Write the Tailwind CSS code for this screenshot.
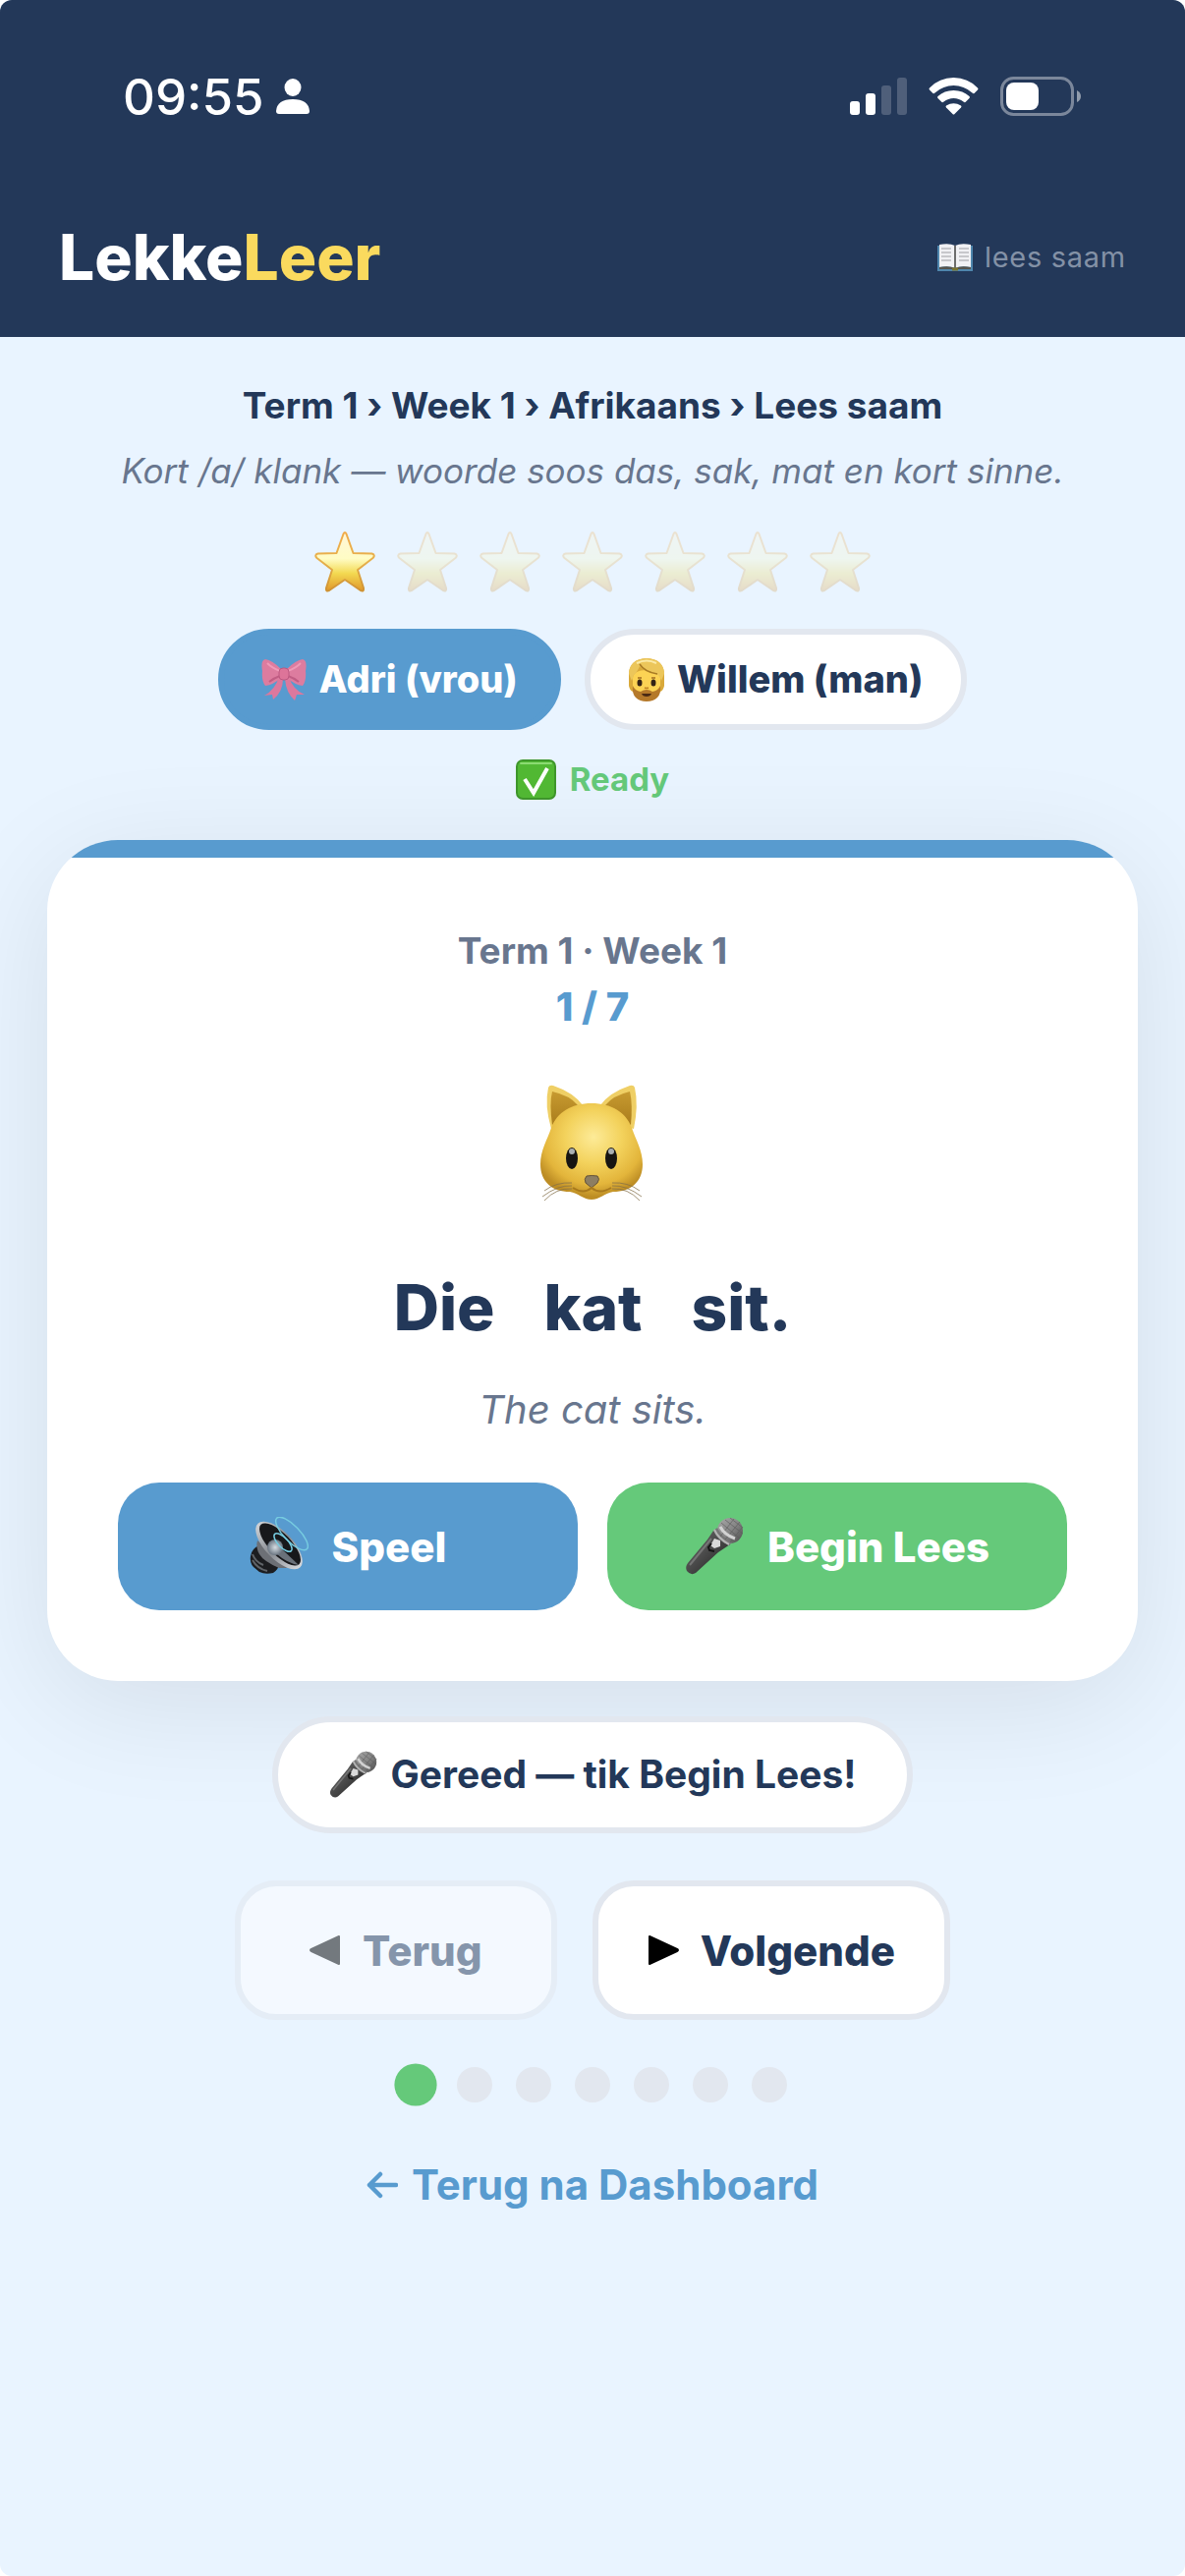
<!DOCTYPE html>
<html lang="af">
  <head>
    <meta charset="UTF-8" />
    <meta name="viewport" content="width=device-width, initial-scale=1.0" />
    <script src="https://cdn.jsdelivr.net/npm/@tailwindcss/browser@4"></script>
    <title>LekkeLeer</title>
  </head>
  <body class="bg-white font-['Inter','Liberation_Sans',sans-serif] text-[#233859]">
    <!-- shared drawings -->
    <svg class="absolute h-0 w-0" aria-hidden="true">
      <defs>
        <linearGradient id="starFill" x1="0" y1="0" x2="0" y2="1">
          <stop offset="0" stop-color="#fff6d8" />
          <stop offset=".45" stop-color="#fffcc4" />
          <stop offset=".7" stop-color="#f3d951" />
          <stop offset="1" stop-color="#e0962a" />
        </linearGradient>
        <linearGradient id="starEdge" x1="0" y1="0" x2="0" y2="1">
          <stop offset="0" stop-color="#f0ac4a" />
          <stop offset=".5" stop-color="#e6b04c" />
          <stop offset="1" stop-color="#cf9233" />
        </linearGradient>
        <linearGradient id="micBody" x1="0" y1="0" x2="1" y2="1">
          <stop offset="0" stop-color="#6f6f6f" />
          <stop offset=".45" stop-color="#4c4c4c" />
          <stop offset="1" stop-color="#1c1c1c" />
        </linearGradient>
        <linearGradient id="micHead" x1="0" y1="0" x2="1" y2="1">
          <stop offset="0" stop-color="#a9a9a9" />
          <stop offset=".5" stop-color="#868686" />
          <stop offset="1" stop-color="#4a4a4a" />
        </linearGradient>
        <symbol id="star" viewBox="0 0 66 66">
          <path
            d="M31.500 4.500Q33 1.500 34.500 4.500L41.500 24 60.500 24.500Q64.500 26 61.500 29L46 41 52 59.500Q52.500 63.500 49 62L33 51 17 62Q13.500 63.500 14 59.500L20 41 4.500 29Q1.500 26 5.500 24.500L24.500 24Z"
            fill="url(#starFill)"
            stroke="url(#starEdge)"
            stroke-width="2"
            stroke-linejoin="round"
          />
        </symbol>
        <symbol id="mic" viewBox="0 0 60 60">
          <path d="M29 14 46 28Q40 32 34 36L11 57Q6 60 2 55 0 51 3 47L23 23Z" fill="url(#micBody)" />
          <path d="M27 22 5 49" fill="none" stroke="#858585" stroke-width="2" opacity=".7" />
          <circle cx="46" cy="14" r="13" fill="url(#micHead)" />
          <path d="M33 11Q37 20 48 26L45 29Q33 24 29 14Z" fill="#777" />
          <path d="M37 6 56 22M41 3 59 17M46 1 59 11M36 20 50 2M41 23 56 5M46 26 59 10" stroke="#5a5a5a" stroke-width="1" opacity=".6" />
          <path d="M36 10Q40 18 51 22" fill="none" stroke="#d2d2d2" stroke-width="3" />
          <path d="M30 13Q34 22 45 28" fill="none" stroke="#b5b5b5" stroke-width="2" />
          <path d="M30 22 36 24 36 30 30 32 26 29Z" fill="#d9d9d9" />
          <path d="M27 27 24 31 25 34 30 35" fill="none" stroke="#141414" stroke-width="2" />
        </symbol>
      </defs>
    </svg>

    <div class="min-h-screen overflow-hidden rounded-xl bg-[#e9f4ff]">
      <header class="bg-[#233859] text-white">
        <!-- status bar -->
        <div class="flex h-48 items-center justify-between pt-1 pr-[104px] pl-[125px]">
          <div class="flex items-center gap-3">
            <span class="text-[51px] leading-none font-medium">09:55</span>
            <svg class="h-9 w-[34px]" viewBox="0 0 34 36" fill="white">
              <ellipse cx="17" cy="9" rx="8.500" ry="9" />
              <path d="M3 36Q0 36 0 33 1 21 17 21T34 33Q34 36 31 36Z" />
            </svg>
          </div>
          <div class="flex items-center gap-[22px]">
            <svg class="h-[38px] w-[58px]" viewBox="0 0 58 38" fill="white">
              <rect y="24" width="10" height="14" rx="3" />
              <rect x="16" y="16" width="10" height="22" rx="3" />
              <rect x="32" y="8" width="10" height="30" rx="3" opacity=".2" />
              <rect x="48" width="10" height="38" rx="3" opacity=".2" />
            </svg>
            <svg class="h-[38px] w-[51px]" viewBox="0 0 51 38" fill="white">
              <path d="M1 10.500Q11 0 25.500 0T50 10.500Q51 11.500 50 12.500L46.500 16Q45.500 16.500 44.500 15.500 36 8 25.500 8T6.500 15.500Q5.500 16.500 4.500 16L1 12.500Q0 11.500 1 10.500Z" />
              <path d="M9.500 19Q16 13 25.500 13T41.500 19Q42.500 20 41.500 21L37.500 25Q36.500 25.500 35.500 24.500 31 21 25.500 21T15.500 24.500Q14.500 25.500 13.500 25L9.500 21Q8.500 20 9.500 19Z" />
              <path d="M18 28.500Q25.500 24 33 28.500 34 29.500 33 30.500L26.500 37Q25.500 38 24.500 37L18 30.500Q17 29.500 18 28.500Z" />
            </svg>
            <svg class="h-10 w-[84px]" viewBox="0 0 84 40" fill="white">
              <rect x="1.500" y="1.500" width="72" height="37" rx="12" fill="none" stroke="white" stroke-width="3" opacity=".4" />
              <rect x="6" y="6" width="33" height="28" rx="8" />
              <path d="M78 14Q82 16 82 20T78 26Z" opacity=".5" />
            </svg>
          </div>
        </div>
        <!-- brand -->
        <div class="flex items-start justify-between px-[60px] pt-[30px] pb-[42px]">
          <a href="#" class="text-[64px] leading-[79px] font-extrabold">Lekke<span class="text-[#fada5e]">Leer</span></a>
          <span class="flex items-center gap-3 pt-4 text-[29px] leading-[48px] tracking-wide text-[#8391a6]">
            <svg class="h-7 w-9" viewBox="0 0 36 28">
              <path d="M0 2H36V28H0Z" fill="#4f86ad" />
              <path d="M2 1Q12-1 18 2 24-1 34 1V24Q24 22 18 25 12 22 2 24Z" fill="#f1f1f4" />
              <path d="M2 24Q12 22 18 25 24 22 34 24V26H2Z" fill="#56544e" />
              <path d="M18 2V25" stroke="#6d6d6d" stroke-width="2" />
              <path d="M4 5H14M4 9H14M4 13H14M4 17H14M22 5H32M22 9H32M22 13H32M22 17H32" stroke="#b9b9bd" stroke-width="1.500" />
              <path d="M15 26H21" stroke="#7a7430" stroke-width="3" />
            </svg>
            lees saam
          </span>
        </div>
      </header>

      <main class="flex flex-col items-center px-12 pt-11">
        <p class="text-[37px] leading-[52px] font-bold">Term 1 › Week 1 › Afrikaans › Lees saam</p>
        <p class="mt-3 text-[35px] leading-[56px] text-[#68768e] italic">Kort /a/ klank — woorde soos das, sak, mat en kort sinne.</p>

        <div class="mt-8 flex gap-[18px]" role="img" aria-label="1 van 7 sterre">
          <svg class="size-[66px]"><use href="#star" /></svg>
          <svg class="size-[66px] opacity-25"><use href="#star" /></svg>
          <svg class="size-[66px] opacity-25"><use href="#star" /></svg>
          <svg class="size-[66px] opacity-25"><use href="#star" /></svg>
          <svg class="size-[66px] opacity-25"><use href="#star" /></svg>
          <svg class="size-[66px] opacity-25"><use href="#star" /></svg>
          <svg class="size-[66px] opacity-25"><use href="#star" /></svg>
        </div>

        <!-- voice choice -->
        <div class="mt-[35px] flex gap-6">
          <button type="button" class="flex h-[103px] items-center gap-3 rounded-full border-6 border-[#589bcf] bg-[#589bcf] px-[38px] text-[38px] font-extrabold text-white">
            <svg class="h-[42px] w-[46px]" viewBox="0 0 46 42">
              <path d="M18 18Q14 31 3 37L11 36 12 41Q22 33 22 20ZM28 18Q32 31 44 36L36 36 34 42Q25 34 24 20Z" fill="#dc789d" />
              <path d="M20 10Q11 1 4 0-1 1 1 12 0 22 4 27 12 26 20 19ZM26 10Q35 1 42 0 47 1 45 12 46 22 42 27 34 26 26 19Z" fill="#dd7c9f" />
              <path d="M19 12Q11 9 6 4M27 12Q35 9 40 4" fill="none" stroke="#ef9ab8" stroke-width="2" />
              <path d="M19 17Q13 19 8 23M27 17Q33 19 38 23" fill="none" stroke="#c15d84" stroke-width="2" />
              <rect x="18" y="9" width="10" height="12" rx="4" fill="#dd7499" stroke="#bc5880" />
            </svg>
            Adri (vrou)
          </button>
          <button type="button" class="flex h-[103px] items-center gap-3 rounded-full border-6 border-[#e2e7ef] bg-white px-[38px] text-[38px] font-extrabold">
            <svg class="h-[44px] w-[38px]" viewBox="0 0 38 44">
              <path d="M19 0Q37 1 37 17V28Q36 33 33 34H5Q2 33 1 28V17Q1 1 19 0Z" fill="#d9a93a" />
              <path d="M5 20Q6 12 19 12T33 20V31Q32 40 19 40T5 31Z" fill="#fcd354" />
              <path d="M5 28Q7 33 13 34 19 30 25 34 31 33 33 28 34 36 30 40 26 44 19 44T8 40Q4 36 5 28Z" fill="#b5792a" />
              <path d="M4 23Q1 16 1 15 2 1 19 0 36 1 37 15 37 16 34 23 33 18 29 16 17 14 12 8 9 15 6 17Z" fill="#ecc65a" />
              <path d="M12 6Q17 14 30 16" fill="none" stroke="#a97b24" stroke-width="1.500" />
              <path d="M9 5Q19 0 29 5" fill="none" stroke="#fbeaa6" stroke-width="2" />
              <ellipse cx="12" cy="25" rx="2.500" ry="3.500" fill="#352315" />
              <ellipse cx="26" cy="25" rx="2.500" ry="3.500" fill="#352315" />
              <path d="M10 20H14M24 20H28" stroke="#a06d22" stroke-width="1.500" />
              <path d="M17 30Q19 31 21 30" fill="none" stroke="#c08425" stroke-width="1.500" />
              <path d="M14 36H24Q23 39 19 39T14 36Z" fill="#4b2a13" />
            </svg>
            Willem (man)
          </button>
        </div>

        <p class="mt-6 flex items-center gap-[14px] text-[33px] leading-[52px] font-bold text-[#65c97a]">
          <svg class="size-[41px]" viewBox="0 0 41 41">
            <rect x="1" y="1" width="39" height="39" rx="6" fill="#52b934" stroke="#3f972c" stroke-width="2" />
            <path d="M5 4H36" stroke="#8bdb72" stroke-width="2" stroke-linecap="round" />
            <path d="M9 20 18 34 32 9" fill="none" stroke="white" stroke-width="4" />
          </svg>
          Ready
        </p>

        <!-- reading card -->
        <section class="mt-9 w-full overflow-hidden rounded-[72px] bg-white shadow-[0_24px_120px_rgba(0,0,0,0.09)]">
          <div class="h-[18px] bg-[#589bcf]"></div>
          <div class="flex flex-col items-center px-[72px] pt-[68px] pb-[72px]">
            <p class="text-[37px] leading-[54px] font-bold text-[#68768e]">Term 1 · Week 1</p>
            <p class="text-[40px] leading-[60px] font-extrabold text-[#589bcf]">1 / 7</p>
            <svg class="mt-12 h-[120px] w-[106px]" viewBox="0 0 106 120">
              <defs>
                <radialGradient id="catFace" cx=".52" cy=".35" r=".62">
                  <stop offset="0" stop-color="#fdeb98" />
                  <stop offset=".45" stop-color="#f3d25c" />
                  <stop offset=".8" stop-color="#e3b53b" />
                  <stop offset="1" stop-color="#bd8d24" />
                </radialGradient>
                <linearGradient id="catEar" x1="0" y1="0" x2="0" y2="1">
                  <stop offset="0" stop-color="#c79a30" />
                  <stop offset="1" stop-color="#aa7d1c" />
                </linearGradient>
              </defs>
              <path d="M11 46Q4 22 8 4 9 1 13 2 34 9 44 23L24 42Z" fill="#efcf65" />
              <path d="M12 42Q9 20 12 8 30 12 38 22L24 36Z" fill="url(#catEar)" />
              <path d="M95 46Q100 22 96 4 95 1 91 2 70 9 60 23L80 42Z" fill="#efcf65" />
              <path d="M92 42Q94 20 91 8 74 12 66 22L80 36Z" fill="url(#catEar)" />
              <path d="M52 20C72 20 87 29 93 45 97 57 104 68 104 82 104 100 92 110 74 110 66 111 60 118 52 118 44 118 38 111 30 110 12 110 0 100 0 82 0 68 7 57 11 45 17 29 32 20 52 20Z" fill="url(#catFace)" />
              <ellipse cx="32" cy="76" rx="6" ry="11" fill="#171512" />
              <ellipse cx="72" cy="76" rx="6" ry="11" fill="#171512" />
              <ellipse cx="32" cy="69" rx="3" ry="3" fill="#aab0b2" />
              <ellipse cx="72" cy="69" rx="3" ry="3" fill="#aab0b2" />
              <path d="M47 94Q52 93 58 94 61 97 58 101L52 106 46 101Q44 97 47 94Z" fill="#8d7e62" stroke="#655337" />
              <path d="M33 106Q44 113 52 106 60 113 72 106" fill="none" stroke="#a8791d" stroke-width="2" />
              <g fill="none" stroke="#84704a" stroke-width="1" opacity=".75">
                <path d="M32 101Q16 100 4 109M32 104Q18 103 2 115M32 107Q16 106 4 119" />
                <path d="M73 101Q89 100 101 109M73 104Q87 103 103 115M73 107Q89 106 101 119" />
              </g>
            </svg>
            <h1 class="mt-[62px] flex gap-[50px] text-[64px] leading-[92px] font-extrabold">
              <span>Die</span>
              <span>kat</span>
              <span>sit.</span>
            </h1>
            <p class="mt-7 text-[40px] leading-[60px] text-[#68768e] italic">The cat sits.</p>

            <div class="mt-11 grid w-full grid-cols-2 gap-[30px]">
              <button type="button" class="flex h-[130px] items-center justify-center gap-6 rounded-[42px] bg-[#589bcf] text-[42px] font-extrabold text-white">
                <svg class="size-[60px]" viewBox="0 0 60 60">
                  <defs>
                    <linearGradient id="coneRim" x1="0" y1="0" x2="1" y2="0">
                      <stop offset="0" stop-color="#cfd2d6" />
                      <stop offset=".5" stop-color="#85898f" />
                      <stop offset="1" stop-color="#d5d8dd" />
                    </linearGradient>
                    <radialGradient id="coneDome">
                      <stop offset="0" stop-color="#d6dde3" />
                      <stop offset="1" stop-color="#6b7682" />
                    </radialGradient>
                  </defs>
                  <path d="M10 29Q2 32 1 40 0 47 4 51L10 56Q16 59 24 57 30 53 30 47Z" fill="#1c1d20" />
                  <path d="M3 38Q6 46 14 49M3 44Q8 53 18 55" fill="none" stroke="#5f6368" stroke-width="2" />
                  <path d="M8 24Q6 31 10 38T30 52L42 52Z" fill="#6d7076" />
                  <ellipse cx="30" cy="29" rx="31" ry="14" transform="rotate(46 30 29)" fill="url(#coneRim)" />
                  <ellipse cx="31" cy="28" rx="28" ry="11" transform="rotate(46 31 28)" fill="#17181b" />
                  <path d="M30 30 50 49Q38 47 28 38Z" fill="#6a717a" />
                  <circle cx="26" cy="31" r="8" fill="url(#coneDome)" />
                  <g fill="none" stroke="#76cbe0" stroke-width="1.500">
                    <ellipse cx="43" cy="17" rx="22" ry="8" transform="rotate(46 43 17)" />
                    <ellipse cx="34" cy="26" rx="12" ry="5" transform="rotate(46 34 26)" />
                  </g>
                </svg>
                Speel
              </button>
              <button type="button" class="flex h-[130px] items-center justify-center gap-6 rounded-[42px] bg-[#65c97a] text-[42px] font-extrabold text-white">
                <svg class="size-[60px]"><use href="#mic" /></svg>
                Begin Lees
              </button>
            </div>
          </div>
        </section>

        <p class="mt-9 flex h-[119px] items-center gap-[14px] rounded-full border-6 border-[#e2e7ef] bg-white px-[52px] text-[39px] font-bold">
          <svg class="size-[49px]"><use href="#mic" /></svg>
          Gereed — tik Begin Lees!
        </p>

        <nav class="mt-12 flex gap-9">
          <button type="button" disabled class="flex h-[142px] items-center gap-[22px] rounded-[42px] border-6 border-[#e2e7ef] bg-white px-[70px] text-[42px] font-extrabold opacity-50">
            <svg class="h-[32px] w-[32px]" viewBox="0 0 32 32">
              <path d="M30 2V30L2 17Q0 16 2 15Z" fill="black" stroke="black" stroke-width="2" stroke-linejoin="round" />
            </svg>
            Terug
          </button>
          <button type="button" class="flex h-[142px] items-center gap-[22px] rounded-[42px] border-6 border-[#e2e7ef] bg-white px-[50px] text-[42px] font-extrabold">
            <svg class="h-[32px] w-[32px]" viewBox="0 0 32 32">
              <path d="M2 2V30L30 17Q32 16 30 15Z" fill="black" stroke="black" stroke-width="2" stroke-linejoin="round" />
            </svg>
            Volgende
          </button>
        </nav>

        <!-- progress dots -->
        <div class="mt-12 flex gap-6">
          <span class="size-9 scale-120 rounded-full bg-[#65c97a]"></span>
          <span class="size-9 rounded-full bg-[#e2e7ef]"></span>
          <span class="size-9 rounded-full bg-[#e2e7ef]"></span>
          <span class="size-9 rounded-full bg-[#e2e7ef]"></span>
          <span class="size-9 rounded-full bg-[#e2e7ef]"></span>
          <span class="size-9 rounded-full bg-[#e2e7ef]"></span>
          <span class="size-9 rounded-full bg-[#e2e7ef]"></span>
        </div>

        <a href="#" class="mt-[54px] flex items-center gap-[14px] text-[42px] leading-[60px] font-bold text-[#589bcf]">
          <svg class="h-7 w-8" viewBox="0 0 32 28" fill="none" stroke="currentColor" stroke-width="4.500" stroke-linecap="round" stroke-linejoin="round">
            <path d="M30 14H3M14 3 3 14 14 25" />
          </svg>
          Terug na Dashboard
        </a>
      </main>
    </div>
  </body>
</html>
